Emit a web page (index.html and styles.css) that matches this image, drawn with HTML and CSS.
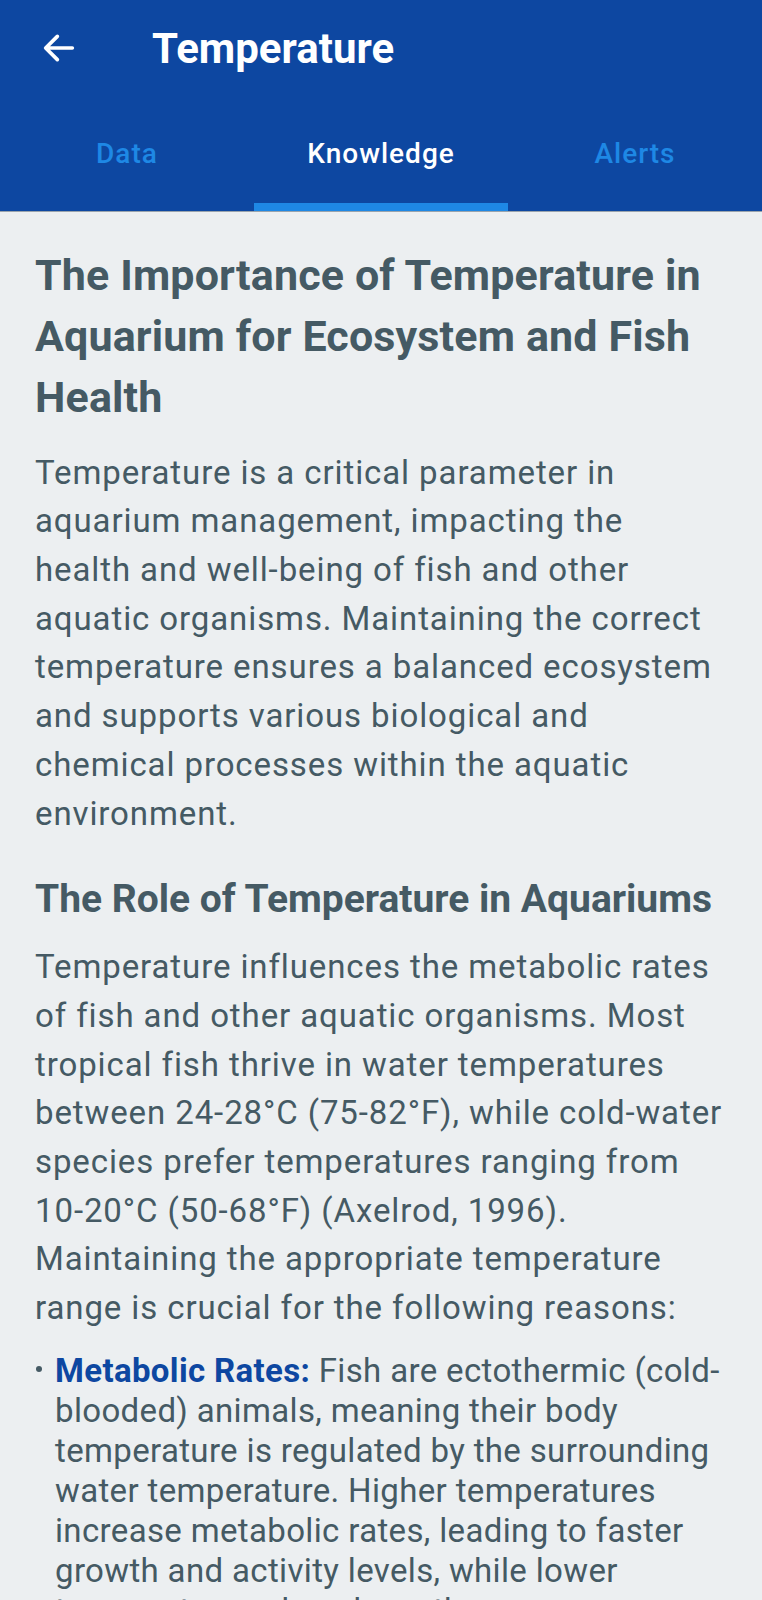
FILE: index.html
```html
<!DOCTYPE html>
<html>
<head>
<meta charset="utf-8">
<link rel="stylesheet" href="styles.css">
</head>
<body>
<header class="appbar">
  <div class="toolbar">
    <svg class="back" width="40" height="40" viewBox="0 0 24 24"><path d="M20 12H4.5M11 5l-7 7 7 7" fill="none" stroke="#fff" stroke-width="2.2" stroke-linecap="round" stroke-linejoin="round"/></svg>
    <h1 class="title">Temperature</h1>
  </div>
  <nav class="tabs">
    <div class="tab">Data</div>
    <div class="tab active">Knowledge</div>
    <div class="tab">Alerts</div>
  </nav>
</header>
<main class="content">
  <h2 class="h-main">The Importance of Temperature in Aquarium for Ecosystem and Fish Health</h2>
  <p class="para">Temperature is a critical parameter in aquarium management, impacting the health and well-being of fish and other aquatic organisms. Maintaining the correct temperature ensures a balanced ecosystem and supports various biological and chemical processes within the aquatic environment.</p>
  <h3 class="h-sub">The Role of Temperature in Aquariums</h3>
  <p class="para">Temperature influences the metabolic rates of fish and other aquatic organisms. Most tropical fish thrive in water temperatures between 24-28°C (75-82°F), while cold-water species prefer temperatures ranging from 10-20°C (50-68°F) (Axelrod, 1996). Maintaining the appropriate temperature range is crucial for the following reasons:</p>
  <ul class="list">
    <li class="item"><span class="dot"></span><span class="item-text"><strong>Metabolic Rates:</strong> Fish are ectothermic (cold-blooded) animals, meaning their body temperature is regulated by the surrounding water temperature. Higher temperatures increase metabolic rates, leading to faster growth and activity levels, while lower temperatures slow down these processes.</span></li>
  </ul>
</main>
</body>
</html>
```
FILE: styles.css
```css
html, body {
  margin: 0;
  padding: 0;
  background: #eceff1;
  font-family: Roboto, "Noto Sans", sans-serif;
}
.appbar {
  background: #0d47a1;
  border-bottom: 1px solid #9aa4ad;
}
.toolbar {
  height: 96px;
  display: flex;
  align-items: center;
}
.back {
  margin-left: 39px;
  width: 40px;
  height: 40px;
}
.title {
  margin: 0 0 0 73px;
  color: #fff;
  font-size: 42px;
  font-weight: 700;
}
.tabs {
  display: flex;
  height: 115px;
}
.tab {
  flex: 1;
  display: flex;
  align-items: center;
  justify-content: center;
  color: #1e88e5;
  font-size: 28px;
  letter-spacing: 1px;
  font-weight: 500;
  box-sizing: border-box;
  border-bottom: 8px solid transparent;
  padding-top: 8px;
}
.tab.active {
  color: #fff;
  border-bottom-color: #1e88e5;
}
.content {
  padding: 33px 35px 0 35px;
  color: #455a64;
}
.h-main {
  margin: 0;
  font-size: 43px;
  letter-spacing: 0.15px;
  line-height: 61.2px;
  font-weight: 700;
}
.para {
  margin: 20px 0 0;
  font-size: 33px;
  letter-spacing: 0.9px;
  line-height: 48.7px;
}
.h-sub {
  margin: 31px 0 0;
  font-size: 39px;
  line-height: 60px;
  font-weight: 700;
}
.h-sub + .para {
  margin-top: 14px;
}
.list {
  list-style: none;
  margin: 18px 0 0;
  padding: 0;
  font-size: 33px;
  letter-spacing: 0.35px;
  line-height: 40px;
}
.item {
  display: flex;
  align-items: flex-start;
}
.dot {
  flex: none;
  width: 6px;
  height: 6px;
  border-radius: 50%;
  background: #455a64;
  margin: 15px 13px 0 1px;
}
.item-text strong {
  color: #0d47a1;
}
```
